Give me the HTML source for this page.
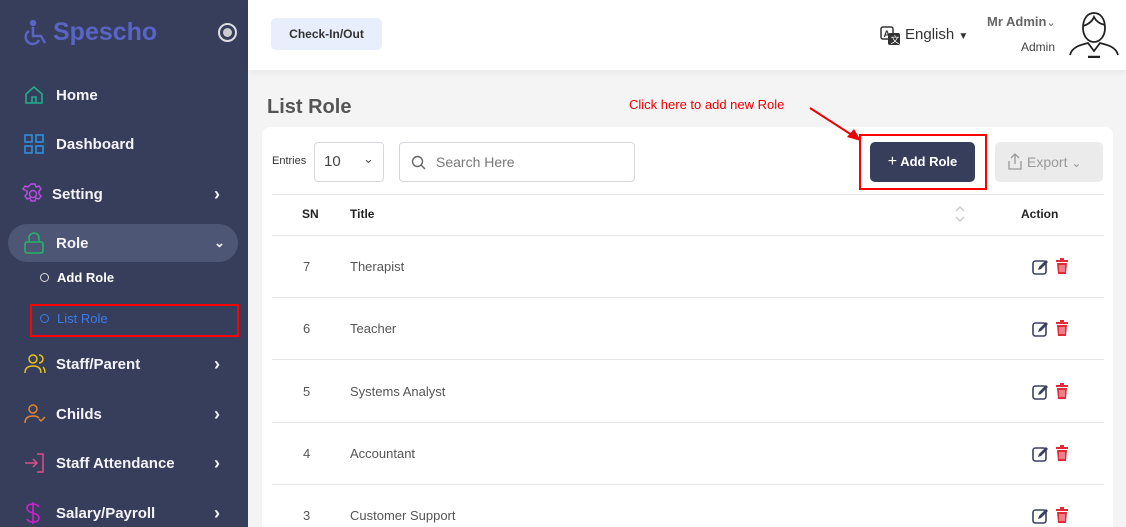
<!DOCTYPE html>
<html><head><meta charset="utf-8"><style>
*{box-sizing:border-box;margin:0;padding:0}
html{width:1126px;height:527px;overflow:hidden}
body{width:1126px;height:527px;overflow:hidden;background:#f4f4f5;font-family:"Liberation Sans",sans-serif;position:relative}
.sb{position:absolute;left:0;top:0;width:248px;height:527px;background:#373e5b;color:#fff}
.logo{position:absolute;left:23px;top:18px;color:#5a64c4;font-size:25px;font-weight:bold;display:flex;align-items:center;gap:2px}
.tog{position:absolute;left:218px;top:23px;width:19px;height:19px;border:2px solid #ddd;border-radius:50%}
.tog:after{content:"";position:absolute;left:3px;top:3px;width:9px;height:9px;border-radius:50%;background:#ccc}
.it{position:absolute;left:0;width:248px;height:38px;display:flex;align-items:center;font-size:15px;font-weight:bold;color:#f4f4f8}
.it svg{position:absolute;left:24px}
.it span{position:absolute;left:56px}
.it .ch{position:absolute;left:214px;font-size:18px}
.sub{position:absolute;left:40px;font-size:13px;font-weight:bold;display:flex;align-items:center;gap:8px}
.sub i{width:9px;height:9px;border:1.5px solid #ddd;border-radius:50%;display:inline-block}
.hd{position:absolute;left:248px;top:0;width:878px;height:70px;background:#fff;box-shadow:0 2px 8px rgba(0,0,0,.06)}
.ck{position:absolute;left:271px;top:18px;width:111px;height:32px;background:#e8eefb;border-radius:5px;font-size:12px;font-weight:bold;color:#333;text-align:center;line-height:32px}
.card{position:absolute;left:262px;top:127px;width:851px;height:400px;background:#fff;border-radius:8px 8px 0 0}
.t{position:absolute;color:#444}
.line{position:absolute;left:272px;width:832px;height:1px;background:#e6e6e6}
.row{position:absolute;font-size:13px;color:#555}
</style></head><body>
<div class="sb">
 <div class="logo"><svg width="28" height="26" viewBox="0 0 28 26" fill="none" stroke="#5a64c4" stroke-width="2.5"><circle cx="10" cy="3" r="2" fill="#5a64c4"/><path d="M10 7v9h8l4 7M6 11a7 7 0 1 0 10 9"/></svg>Spescho</div>
 <div class="tog"></div>
 <div class="it" style="top:76px"><svg width="20" height="20" viewBox="0 0 20 20" fill="none" stroke="#1fae8e" stroke-width="1.6"><path d="M2 9L10 2l8 7v9H2z M8 18v-6h4v6"/></svg><span>Home</span></div>
 <div class="it" style="top:125px"><svg width="20" height="20" viewBox="0 0 20 20" fill="none" stroke="#2e8fe0" stroke-width="1.6"><rect x="1" y="1" width="7" height="7"/><rect x="12" y="1" width="7" height="7"/><rect x="1" y="12" width="7" height="7"/><rect x="12" y="12" width="7" height="7"/></svg><span>Dashboard</span></div>
 <div class="it" style="top:175px"><svg width="22" height="22" viewBox="0 0 22 22" fill="none" stroke="#b44ee0" stroke-width="1.5" style="left:22px"><circle cx="11" cy="11" r="3.5"/><path d="M9 1h4l1 3 3-1 2 3-2 2 0 3 2 2-2 3-3-1-1 3h-4l-1-3-3 1-2-3 2-2V8L1 6l2-3 3 1z"/></svg><span style="left:52px">Setting</span><b class="ch">›</b></div>
 <div style="position:absolute;left:8px;top:224px;width:230px;height:38px;background:#4e5675;border-radius:19px"></div>
 <div class="it" style="top:224px"><svg width="20" height="22" viewBox="0 0 20 22" fill="none" stroke="#27b36b" stroke-width="1.6"><rect x="1" y="10" width="18" height="11" rx="2"/><path d="M5 10V6a5 5 0 0 1 10 0v4"/></svg><span>Role</span><b class="ch" style="font-size:13px">⌄</b></div>
 <div class="sub" style="top:270px"><i></i>Add Role</div>
 <div style="position:absolute;left:30px;top:304px;width:209px;height:33px;border:2px solid #f00"></div>
 <div class="sub" style="top:311px;color:#3b7de8;font-weight:normal"><i style="border-color:#3b7de8"></i>List Role</div>
 <div class="it" style="top:345px"><svg width="22" height="20" viewBox="0 0 22 20" fill="none" stroke="#e8c11a" stroke-width="1.5"><circle cx="9" cy="5" r="4"/><path d="M1 19c0-5 3-7 8-7s8 2 8 7M15 1a4 4 0 0 1 0 8M19 13c1 1 2 3 2 6"/></svg><span>Staff/Parent</span><b class="ch">›</b></div>
 <div class="it" style="top:395px"><svg width="22" height="20" viewBox="0 0 22 20" fill="none" stroke="#e0852c" stroke-width="1.5"><circle cx="9" cy="5" r="4"/><path d="M1 19c0-5 3-7 8-7 3 0 5 1 6 2M15 15l2 2 4-4"/></svg><span>Childs</span><b class="ch">›</b></div>
 <div class="it" style="top:444px"><svg width="22" height="20" viewBox="0 0 22 20" fill="none" stroke="#e04c8c" stroke-width="1.5"><path d="M13 1h6v18h-6M1 10h12M9 6l4 4-4 4"/></svg><span>Staff Attendance</span><b class="ch">›</b></div>
 <div class="it" style="top:494px"><svg width="18" height="24" viewBox="0 0 18 24" fill="none" stroke="#cc22cc" stroke-width="1.6"><path d="M9 1v22M15 6c-1-2-3-3-6-3-3 0-6 1-6 4s3 4 6 5 6 2 6 5-3 4-6 4-5-1-6-3"/></svg><span>Salary/Payroll</span><b class="ch">›</b></div>
</div>
<div class="hd"></div>
<div class="ck">Check-In/Out</div>
<svg style="position:absolute;left:880px;top:26px" width="21" height="20" viewBox="0 0 21 20"><rect x="1" y="1" width="12" height="12" rx="2" fill="#fff" stroke="#333" stroke-width="1.5"/><text x="3.5" y="11" font-size="9" font-family="Liberation Sans" font-weight="bold" fill="#333">A</text><rect x="8" y="7" width="12" height="12" rx="2" fill="#333"/><text x="10.5" y="17" font-size="9" fill="#fff" font-family="Liberation Sans">文</text></svg>
<div class="t" style="left:905px;top:26px;font-size:15px;color:#333">English <span style="font-size:10px">▼</span></div>
<div class="t" style="left:987px;top:14px;font-size:13px;font-weight:bold;color:#666">Mr Admin<span style="font-weight:normal;font-size:11px">⌄</span></div>
<div class="t" style="left:1021px;top:40px;font-size:12px;color:#444">Admin</div>
<svg style="position:absolute;left:1068px;top:10px" width="52" height="48" viewBox="0 0 52 48" fill="none" stroke="#222" stroke-width="1.8"><path d="M15 18c0-10 5-15 11-15s11 5 11 15c0 8-5 14-11 14s-11-6-11-14z"/><path d="M15 16c4-1 9-4 11-9 2 4 6 7 11 8"/><path d="M2 45c2-8 10-10 18-12l6 8 6-8c8 2 16 4 18 12"/><path d="M20 47h12" stroke-width="2.5"/></svg>
<div class="t" style="left:267px;top:96px;font-size:20px;font-weight:bold;color:#555">List Role</div>
<div class="t" style="left:629px;top:97px;font-size:13px;color:#e00">Click here to add new Role</div>
<div class="card"></div>
<svg style="position:absolute;left:805px;top:103px" width="60" height="40"><path d="M5 5L50 34" stroke="#e00" stroke-width="2"/><path d="M56 38L42 34L49 26z" fill="#e00"/></svg>
<div class="t" style="left:272px;top:155px;font-size:11px;color:#333">Entries</div>
<div style="position:absolute;left:314px;top:142px;width:70px;height:40px;border:1px solid #d6d6dc;border-radius:4px;font-size:15px;color:#444;padding:10px 0 0 9px">10<span style="position:absolute;left:48px;top:8px;font-size:13px;color:#555">⌄</span></div>
<div style="position:absolute;left:399px;top:142px;width:236px;height:40px;border:1px solid #d6d6dc;border-radius:4px;font-size:14px;color:#777;padding:11px 0 0 36px">Search Here<svg style="position:absolute;left:11px;top:12px" width="15" height="15" fill="none" stroke="#666" stroke-width="1.4"><circle cx="6.5" cy="6.5" r="5"/><path d="M10 10l4 4"/></svg></div>
<div style="position:absolute;left:859px;top:134px;width:128px;height:56px;border:2px solid #f00"></div>
<div style="position:absolute;left:870px;top:142px;width:105px;height:40px;background:#373e5b;border-radius:5px;color:#fff;font-size:13px;font-weight:bold;text-align:center;line-height:40px"><span style="font-weight:normal;font-size:16px">+</span> Add Role</div>
<div style="position:absolute;left:995px;top:142px;width:108px;height:40px;background:#ebebeb;border-radius:5px;color:#999;font-size:14px;line-height:40px;padding-left:32px">Export <span style="font-size:12px">⌄</span><svg style="position:absolute;left:13px;top:11px" width="14" height="17" fill="none" stroke="#999" stroke-width="1.3"><path d="M7 11V1M3 5l4-4 4 4M1 8v8h12V8"/></svg></div>
<div class="line" style="top:194px"></div>
<div class="t" style="left:302px;top:207px;font-size:12px;font-weight:bold;color:#222">SN</div>
<div class="t" style="left:350px;top:207px;font-size:12px;font-weight:bold;color:#222">Title</div>
<svg style="position:absolute;left:954px;top:205px" width="12" height="18" fill="none" stroke="#ccc" stroke-width="1.5"><path d="M2 6l4-4 4 4M2 12l4 4 4-4"/></svg>
<div class="t" style="left:1021px;top:207px;font-size:12px;font-weight:bold;color:#222">Action</div>
<div class="line" style="top:235px"></div>
<div class="line" style="top:297px"></div>
<div class="line" style="top:359px"></div>
<div class="line" style="top:422px"></div>
<div class="line" style="top:484px"></div>
<div class="row" style="left:303px;top:259px">7</div><div class="row" style="left:350px;top:259px">Therapist</div>
<div class="row" style="left:303px;top:321px">6</div><div class="row" style="left:350px;top:321px">Teacher</div>
<div class="row" style="left:303px;top:384px">5</div><div class="row" style="left:350px;top:384px">Systems Analyst</div>
<div class="row" style="left:303px;top:446px">4</div><div class="row" style="left:350px;top:446px">Accountant</div>
<div class="row" style="left:303px;top:508px">3</div><div class="row" style="left:350px;top:508px">Customer Support</div>
<svg width="0" height="0" style="position:absolute"><defs><g id="ic"><rect x="1" y="3" width="13" height="13" rx="2.5" fill="none" stroke="#3a4060" stroke-width="1.6"/><path d="M6 12l1-3 7-7 2 2-7 7z" fill="#3a4060"/><g fill="#e02a3a"><rect x="24" y="2" width="12" height="2"/><rect x="28" y="0" width="4" height="2"/><path d="M25 5h10l-1 11h-8z"/></g><g stroke="#fff" stroke-width="0.8"><path d="M28 7v7M30 7v7M32 7v7"/></g></g></defs></svg>
<svg style="position:absolute;left:1032px;top:258px" width="42" height="18"><use href="#ic"/></svg>
<svg style="position:absolute;left:1032px;top:320px" width="42" height="18"><use href="#ic"/></svg>
<svg style="position:absolute;left:1032px;top:383px" width="42" height="18"><use href="#ic"/></svg>
<svg style="position:absolute;left:1032px;top:445px" width="42" height="18"><use href="#ic"/></svg>
<svg style="position:absolute;left:1032px;top:507px" width="42" height="18"><use href="#ic"/></svg>
</body></html>
